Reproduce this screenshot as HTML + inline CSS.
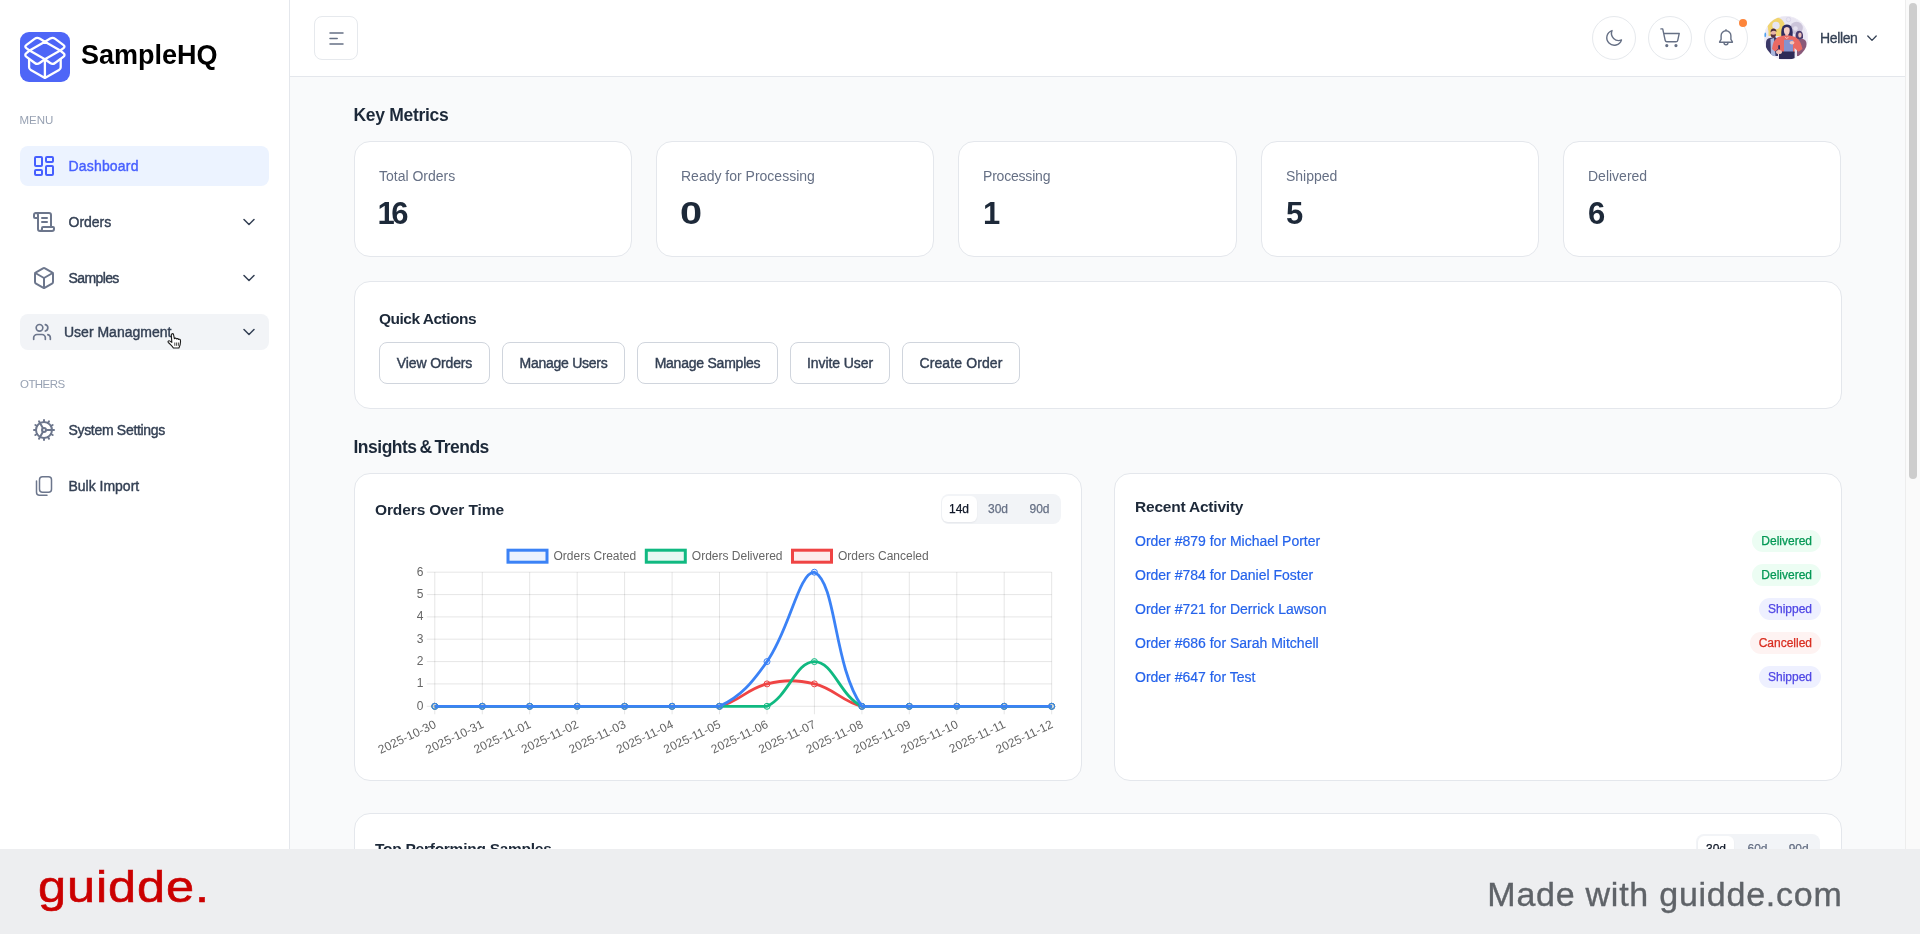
<!DOCTYPE html>
<html lang="en">
<head>
<meta charset="utf-8">
<title>SampleHQ Dashboard</title>
<style>
*{box-sizing:border-box;margin:0;padding:0}
html,body{width:1920px;height:934px;overflow:hidden;background:#f9fafb;font-family:"Liberation Sans",sans-serif;color:#1d2939}
.abs{position:absolute}
#app{position:relative;width:1920px;height:934px;overflow:hidden;background:#f9fafb;will-change:transform}
/* sidebar */
#sidebar{position:absolute;left:0;top:0;width:290px;height:934px;background:#fff;border-right:1px solid #e4e7ec}
.logo{position:absolute;left:20px;top:32px;width:50px;height:50px;border-radius:9px;background:#4e66f7}
.brand{position:absolute;left:81px;top:39px;font-size:27px;font-weight:700;color:#000;line-height:32px;white-space:nowrap}
.sect{position:absolute;left:19.5px;font-size:11.5px;color:#98a2b3;line-height:16px}
.nav{position:absolute;left:20px;width:249px;height:40px;border-radius:8px}
.nav .ic{position:absolute;left:12px;top:8px;width:24px;height:24px}
.nav .tx{position:absolute;left:48px;top:0;line-height:40px;font-size:14px;font-weight:400;color:#344054;white-space:nowrap;-webkit-text-stroke:.4px currentColor}
.nav .chev{position:absolute;left:223px;top:15px;width:12px;height:10px}
.nav.active{background:#ecf3ff}
.nav.active .tx{color:#465fff}
.nav.hover{background:#f2f4f7;height:36px}
/* header */
#header{position:absolute;left:290px;top:0;width:1615px;height:77px;background:#fff;border-bottom:1px solid #e4e7ec}
.hbtn{position:absolute;top:16px;width:44px;height:44px;border:1px solid #e6e9ed;background:#fff}
.circle{border-radius:50%}
/* main */
.h2{position:absolute;left:353.5px;font-size:17.5px;letter-spacing:-.3px;font-weight:700;color:#1d2939;line-height:28px;white-space:nowrap}
.card{position:absolute;background:#fff;border:1px solid #e4e7ec;border-radius:16px}
.metric .lb{position:absolute;left:24px;top:24px;font-size:14px;color:#667085;line-height:20px;white-space:nowrap}
.metric .vl{position:absolute;left:24px;top:54px;font-size:31px;font-weight:700;color:#1d2939;line-height:36px}
.h3{position:absolute;font-size:15.5px;font-weight:700;color:#1d2939;line-height:24px;white-space:nowrap}
.qbtn{position:absolute;top:60px;height:42px;border:1px solid #d0d5dd;border-radius:8px;background:#fff;font-size:14px;color:#344054;line-height:40px;text-align:center;white-space:nowrap;-webkit-text-stroke:.4px currentColor}

.seg{position:absolute;height:30px;border-radius:8px;background:#f2f4f7}
.seg span{position:absolute;top:2px;height:26px;border-radius:6px;font-size:12px;line-height:26px;text-align:center;color:#667085;-webkit-text-stroke:.25px currentColor}
.seg span.on{background:#fff;color:#101828;box-shadow:0 1px 2px rgba(16,24,40,.06)}
.chartsvg{position:absolute;left:-355px;top:-474px;pointer-events:none}
.act{position:absolute;left:20px;top:56px;width:686px;list-style:none}
.act li{position:relative;height:34px}
.act a{position:absolute;left:0;top:0;line-height:22px;font-size:14px;color:#2563eb;white-space:nowrap;-webkit-text-stroke:.2px currentColor}
.bdg{position:absolute;right:0;top:0;height:22px;padding:0 9px;border-radius:11px;font-size:12px;line-height:22px;-webkit-text-stroke:.25px currentColor}
.bdg.ok{background:#ecfdf3;color:#039855}
.bdg.ship{background:#eef0ff;color:#4f46e5}
.bdg.err{background:#fef3f2;color:#d92d20}
.gl{position:absolute;left:38.2px;top:7.5px;font-size:44.5px;line-height:60px;color:#cb0000;letter-spacing:.8px;transform:scaleX(1.135);transform-origin:0 0;-webkit-text-stroke:.6px #cb0000;white-space:nowrap}
.mw{position:absolute;right:77.5px;top:23px;font-size:34px;letter-spacing:.75px;-webkit-text-stroke:.35px #5f6368;line-height:44px;color:#5f6368;white-space:nowrap}
.uname{position:absolute;left:1530px;top:28px;letter-spacing:-.36px;font-size:14px;line-height:20px;color:#344054;-webkit-text-stroke:.3px currentColor}

.nav .ic{color:#6c768c}
.nav.active .ic{color:#465fff}
.dot{position:absolute;left:34px;top:2px;width:8px;height:8px;border-radius:50%;background:#fd853a}
.avatar{position:absolute;left:1474px;top:16px;width:44px;height:44px;border-radius:50%;overflow:hidden;background:#e9e4f3}
/* footer */
#footer{position:absolute;left:0;top:849px;width:1920px;height:85px;background:#edeef0}
#scroll{position:absolute;left:1905px;top:0;width:15px;height:849px;background:#fafafa;border-left:1px solid #ededed}
#thumb{position:absolute;left:3px;top:3px;width:8px;height:476px;border-radius:4px;background:#cdcdcd}
</style>
</head>
<body>
<div id="app">

<!-- MAIN CONTENT -->
<main id="main">
  <h2 class="h2" style="top:101px">Key Metrics</h2>
  <div class="card metric" style="left:354px;top:141px;width:278px;height:116px"><div class="lb">Total Orders</div><div class="vl" style="letter-spacing:-3.4px;left:22.5px">16</div></div>
  <div class="card metric" style="left:656px;top:141px;width:278px;height:116px"><div class="lb">Ready for Processing</div><div class="vl" style="transform:scaleX(1.28);transform-origin:0 0;left:22.5px">0</div></div>
  <div class="card metric" style="left:958px;top:141px;width:279px;height:116px"><div class="lb" style="letter-spacing:-.2px">Processing</div><div class="vl">1</div></div>
  <div class="card metric" style="left:1261px;top:141px;width:278px;height:116px"><div class="lb">Shipped</div><div class="vl">5</div></div>
  <div class="card metric" style="left:1563px;top:141px;width:278px;height:116px"><div class="lb">Delivered</div><div class="vl">6</div></div>

  <div class="card" id="quick" style="left:354px;top:281px;width:1488px;height:128px">
    <h3 class="h3" style="left:24px;top:25px;letter-spacing:-.5px">Quick Actions</h3>
    <div class="qbtn" style="letter-spacing:-0.12px;left:24px;width:111px">View Orders</div>
    <div class="qbtn" style="letter-spacing:-0.27px;left:147px;width:123px">Manage Users</div>
    <div class="qbtn" style="letter-spacing:-0.23px;left:282px;width:141px">Manage Samples</div>
    <div class="qbtn" style="letter-spacing:-0.08px;left:435px;width:100px">Invite User</div>
    <div class="qbtn" style="letter-spacing:0.12px;left:547px;width:118px">Create Order</div>
  </div>

  <h2 class="h2" style="top:433px;letter-spacing:-.5px;word-spacing:-1.5px">Insights &amp; Trends</h2>

  <div class="card" id="chartcard" style="left:354px;top:473px;width:728px;height:308px">
    <h3 class="h3" style="left:20px;top:24px;letter-spacing:-.11px">Orders Over Time</h3>
    <div class="seg" style="left:585.5px;top:20px;width:120.5px">
      <span class="on" style="left:1px;width:35px">14d</span>
      <span style="left:39px;width:37px">30d</span>
      <span style="left:80px;width:38px">90d</span>
    </div>
    <svg class="chartsvg" width="1920" height="934" viewBox="0 0 1920 934" font-family="Liberation Sans, sans-serif">
<path d="M434.8 572.2V714.3M482.3 572.2V714.3M529.7 572.2V714.3M577.2 572.2V714.3M624.6 572.2V714.3M672.1 572.2V714.3M719.5 572.2V714.3M767.0 572.2V714.3M814.4 572.2V714.3M861.9 572.2V714.3M909.3 572.2V714.3M956.8 572.2V714.3M1004.2 572.2V714.3M1051.7 572.2V714.3M426.8 706.3H1051.7M426.8 683.9H1051.7M426.8 661.6H1051.7M426.8 639.2H1051.7M426.8 616.9H1051.7M426.8 594.6H1051.7M426.8 572.2H1051.7" stroke="#000" stroke-opacity=".1" stroke-width="1" fill="none"/>
<g font-size="12" fill="#666" text-anchor="end"><text x="423.5" y="709.8">0</text><text x="423.5" y="687.4">1</text><text x="423.5" y="665.1">2</text><text x="423.5" y="642.8">3</text><text x="423.5" y="620.4">4</text><text x="423.5" y="598.1">5</text><text x="423.5" y="575.7">6</text></g>
<g font-size="12" fill="#666" text-anchor="end" letter-spacing=".12"><text transform="translate(435.3 723.5) rotate(-25.5)" x="0" y="4">2025-10-30</text><text transform="translate(482.8 723.5) rotate(-25.5)" x="0" y="4">2025-10-31</text><text transform="translate(530.2 723.5) rotate(-25.5)" x="0" y="4">2025-11-01</text><text transform="translate(577.7 723.5) rotate(-25.5)" x="0" y="4">2025-11-02</text><text transform="translate(625.1 723.5) rotate(-25.5)" x="0" y="4">2025-11-03</text><text transform="translate(672.6 723.5) rotate(-25.5)" x="0" y="4">2025-11-04</text><text transform="translate(720.0 723.5) rotate(-25.5)" x="0" y="4">2025-11-05</text><text transform="translate(767.5 723.5) rotate(-25.5)" x="0" y="4">2025-11-06</text><text transform="translate(814.9 723.5) rotate(-25.5)" x="0" y="4">2025-11-07</text><text transform="translate(862.4 723.5) rotate(-25.5)" x="0" y="4">2025-11-08</text><text transform="translate(909.8 723.5) rotate(-25.5)" x="0" y="4">2025-11-09</text><text transform="translate(957.3 723.5) rotate(-25.5)" x="0" y="4">2025-11-10</text><text transform="translate(1004.7 723.5) rotate(-25.5)" x="0" y="4">2025-11-11</text><text transform="translate(1052.2 723.5) rotate(-25.5)" x="0" y="4">2025-11-12</text></g>
<path d="M434.8 706.3C453.8 706.3 463.3 706.3 482.3 706.3C501.2 706.3 510.7 706.3 529.7 706.3C548.7 706.3 558.2 706.3 577.2 706.3C596.1 706.3 605.6 706.3 624.6 706.3C643.6 706.3 653.1 706.3 672.1 706.3C691.1 706.3 701.5 706.3 719.5 706.3C739.5 701.6 747.0 688.6 767.0 683.9C785.0 679.7 796.4 679.7 814.4 683.9C834.4 688.6 842.0 701.6 861.9 706.3C879.9 706.3 890.4 706.3 909.3 706.3C928.3 706.3 937.8 706.3 956.8 706.3C975.8 706.3 985.3 706.3 1004.2 706.3C1023.2 706.3 1032.7 706.3 1051.7 706.3" fill="none" stroke="#ef4444" stroke-width="2.8" stroke-linejoin="round"/>
<g fill="#ef4444" fill-opacity=".1" stroke="#ef4444" stroke-width="1"><circle cx="434.8" cy="706.3" r="3"/><circle cx="482.3" cy="706.3" r="3"/><circle cx="529.7" cy="706.3" r="3"/><circle cx="577.2" cy="706.3" r="3"/><circle cx="624.6" cy="706.3" r="3"/><circle cx="672.1" cy="706.3" r="3"/><circle cx="719.5" cy="706.3" r="3"/><circle cx="767.0" cy="683.9" r="3"/><circle cx="814.4" cy="683.9" r="3"/><circle cx="861.9" cy="706.3" r="3"/><circle cx="909.3" cy="706.3" r="3"/><circle cx="956.8" cy="706.3" r="3"/><circle cx="1004.2" cy="706.3" r="3"/><circle cx="1051.7" cy="706.3" r="3"/></g>
<path d="M434.8 706.3C453.8 706.3 463.3 706.3 482.3 706.3C501.2 706.3 510.7 706.3 529.7 706.3C548.7 706.3 558.2 706.3 577.2 706.3C596.1 706.3 605.6 706.3 624.6 706.3C643.6 706.3 653.1 706.3 672.1 706.3C691.1 706.3 700.5 706.3 719.5 706.3C738.5 706.3 751.0 706.3 767.0 706.3C788.9 696.0 795.4 661.6 814.4 661.6C833.4 661.6 839.9 696.0 861.9 706.3C877.9 706.3 890.4 706.3 909.3 706.3C928.3 706.3 937.8 706.3 956.8 706.3C975.8 706.3 985.3 706.3 1004.2 706.3C1023.2 706.3 1032.7 706.3 1051.7 706.3" fill="none" stroke="#10b981" stroke-width="2.8" stroke-linejoin="round"/>
<g fill="#10b981" fill-opacity=".1" stroke="#10b981" stroke-width="1"><circle cx="434.8" cy="706.3" r="3"/><circle cx="482.3" cy="706.3" r="3"/><circle cx="529.7" cy="706.3" r="3"/><circle cx="577.2" cy="706.3" r="3"/><circle cx="624.6" cy="706.3" r="3"/><circle cx="672.1" cy="706.3" r="3"/><circle cx="719.5" cy="706.3" r="3"/><circle cx="767.0" cy="706.3" r="3"/><circle cx="814.4" cy="661.6" r="3"/><circle cx="861.9" cy="706.3" r="3"/><circle cx="909.3" cy="706.3" r="3"/><circle cx="956.8" cy="706.3" r="3"/><circle cx="1004.2" cy="706.3" r="3"/><circle cx="1051.7" cy="706.3" r="3"/></g>
<path d="M434.8 706.3C453.8 706.3 463.3 706.3 482.3 706.3C501.2 706.3 510.7 706.3 529.7 706.3C548.7 706.3 558.2 706.3 577.2 706.3C596.1 706.3 605.6 706.3 624.6 706.3C643.6 706.3 653.1 706.3 672.1 706.3C691.1 706.3 703.5 706.3 719.5 706.3C741.5 696.0 752.1 682.6 767.0 661.6C790.1 629.0 798.6 572.2 814.4 572.2C836.6 582.6 833.4 666.1 861.9 706.3C871.4 706.3 890.4 706.3 909.3 706.3C928.3 706.3 937.8 706.3 956.8 706.3C975.8 706.3 985.3 706.3 1004.2 706.3C1023.2 706.3 1032.7 706.3 1051.7 706.3" fill="none" stroke="#3b82f6" stroke-width="2.8" stroke-linejoin="round"/>
<g fill="#3b82f6" fill-opacity=".1" stroke="#3b82f6" stroke-width="1"><circle cx="434.8" cy="706.3" r="3"/><circle cx="482.3" cy="706.3" r="3"/><circle cx="529.7" cy="706.3" r="3"/><circle cx="577.2" cy="706.3" r="3"/><circle cx="624.6" cy="706.3" r="3"/><circle cx="672.1" cy="706.3" r="3"/><circle cx="719.5" cy="706.3" r="3"/><circle cx="767.0" cy="661.6" r="3"/><circle cx="814.4" cy="572.2" r="3"/><circle cx="861.9" cy="706.3" r="3"/><circle cx="909.3" cy="706.3" r="3"/><circle cx="956.8" cy="706.3" r="3"/><circle cx="1004.2" cy="706.3" r="3"/><circle cx="1051.7" cy="706.3" r="3"/></g>
<rect x="508.0" y="550.2" width="39" height="12" fill="#3b82f6" fill-opacity=".1" stroke="#3b82f6" stroke-width="3"/>
<text x="553.5" y="560.3" font-size="12" fill="#666">Orders Created</text>
<rect x="646.3" y="550.2" width="39" height="12" fill="#10b981" fill-opacity=".1" stroke="#10b981" stroke-width="3"/>
<text x="691.8" y="560.3" font-size="12" fill="#666">Orders Delivered</text>
<rect x="792.5" y="550.2" width="39" height="12" fill="#ef4444" fill-opacity=".1" stroke="#ef4444" stroke-width="3"/>
<text x="838.0" y="560.3" font-size="12" fill="#666">Orders Canceled</text>
</svg>
  </div>

  <div class="card" id="recent" style="left:1114px;top:473px;width:728px;height:308px">
    <h3 class="h3" style="left:20px;top:21px;letter-spacing:-.21px">Recent Activity</h3>
    <ul class="act">
      <li><a>Order #879 for Michael Porter</a><span class="bdg ok">Delivered</span></li>
      <li><a>Order #784 for Daniel Foster</a><span class="bdg ok">Delivered</span></li>
      <li><a>Order #721 for Derrick Lawson</a><span class="bdg ship">Shipped</span></li>
      <li><a>Order #686 for Sarah Mitchell</a><span class="bdg err">Cancelled</span></li>
      <li><a>Order #647 for Test</a><span class="bdg ship">Shipped</span></li>
    </ul>
  </div>

  <div class="card" id="top" style="left:354px;top:813px;width:1488px;height:200px">
    <h3 class="h3" style="left:20px;top:23.300px;letter-spacing:-.26px">Top Performing Samples</h3>
    <div class="seg" style="left:1341px;top:20px;width:123.5px">
      <span class="on" style="left:2px;width:36px">30d</span>
      <span style="left:42.5px;width:38px">60d</span>
      <span style="left:83.700px;width:38px">90d</span>
    </div>
  </div>
</main>

<!-- HEADER -->
<header id="header">
  <div class="hbtn" style="left:24px;border-radius:8px"><svg class="abs" style="left:13px;top:13.5px" width="18" height="14" viewBox="0 0 18 14" fill="none" stroke="#667085" stroke-width="1.5" stroke-linecap="round"><path d="M2 2h13M2 7.5h7.2M2 13h13"/></svg></div>
  <div class="hbtn circle" style="left:1302px"><svg class="abs" style="left:11px;top:11px" width="20" height="20" viewBox="0 0 20 20" fill="none" stroke="#667085" stroke-width="1.4" stroke-linejoin="round"><path d="M17.45 11.95A7.2 7.2 0 0 1 8.05 2.55a7.5 7.5 0 1 0 9.4 9.4Z"/></svg></div>
  <div class="hbtn circle" style="left:1358px"><svg class="abs" style="left:10px;top:10px" width="22" height="22" viewBox="0 0 24 24" fill="none" stroke="#667085" stroke-width="1.5" stroke-linecap="round" stroke-linejoin="round"><circle cx="8.500" cy="20.300" r="1" fill="#667085"/><circle cx="18.500" cy="20.300" r="1" fill="#667085"/><path d="M2.05 2.05h2l2.66 12.42a2 2 0 0 0 2 1.58h9.78a2 2 0 0 0 1.95-1.57l1.65-7.43H5.12"/></svg></div>
  <div class="hbtn circle" style="left:1414px"><svg class="abs" style="left:11px;top:11px" width="20" height="20" viewBox="0 0 20 20" fill="none" stroke="#667085" stroke-width="1.4" stroke-linecap="round" stroke-linejoin="round"><path d="M10 1.700v1.100M10 2.800a4.900 4.900 0 0 0-4.900 4.900v3.700l-1.500 2.400v.5h12.800v-.5l-1.500-2.400V7.700A4.900 4.900 0 0 0 10 2.800Z"/><path d="M8 14.400a2 2.300 0 0 0 4 0"/></svg><span class="dot"></span></div>
  <div class="avatar"><svg width="44" height="44" viewBox="0 0 44 44"><g><rect width="44" height="44" fill="#f1eff7"/><circle cx="22" cy="21" r="20.5" fill="#e9e6f2"/><circle cx="12.2" cy="10.2" r="8.6" fill="#f1d46e"/><rect x="4.5" y="9" width="15.5" height="11" fill="#f1d46e"/><circle cx="12" cy="9.5" r="3.7" fill="#e6e5f3"/><circle cx="32.5" cy="12" r="6.3" fill="#cbc4d9"/><circle cx="31.5" cy="12.5" r="2.3" fill="#e4e0ee"/><circle cx="24.5" cy="3.6" r="2.2" fill="none" stroke="#d8d4e6" stroke-width=".9"/><ellipse cx="1.2" cy="18.8" rx="1" ry="2.4" fill="#4fa3ef"/><path d="M2 40V27q0-4.5 4-5l5-1 3 2v17Z" fill="#3a3766"/><path d="M6.5 23l3.5-1 1.5 18H7Z" fill="#a9b6de"/><ellipse cx="9.3" cy="17.6" rx="2.6" ry="3.4" fill="#e8b3a6"/><path d="M6.5 16.5q0-4 3-4t3 3.6q-1.2-1.300-3-1.300t-3 1.700Z" fill="#4a2c40"/><path d="M6.700 18q2.600 1.600 5.200 0 .200 3.600-2.600 3.700T6.700 18Z" fill="#55303f"/><path d="M33 40V25l2-2.500 4 .5q3.500 1 3.500 5v12Z" fill="#8a5a79"/><path d="M31.600 22.500q-.900-7.800 3.600-7.800t3.800 7.600l-2.500 1h-3Z" fill="#493a6c"/><ellipse cx="35.900" cy="19.100" rx="1.700" ry="2.700" fill="#ecc0b8"/><path d="M17.500 21.500q-1.500-13 5.400-13t5.600 13l-3 1.500h-5Z" fill="#2f2c5f"/><ellipse cx="22.800" cy="14.400" rx="2.900" ry="4.200" fill="#f6cfc6"/><rect x="21.300" y="17.500" width="3" height="4" fill="#f2c5bb"/><path d="M19.800 12.500q.500-3 3-3t3.200 3q-1.500-1.600-3.100-1.600t-3.100 1.600Z" fill="#2f2c5f"/><path d="M8 33q1-9 6-12l5.500-1.500h6.500l5.500 1.500q5 3 7 12l-4 2.800-4-3.800v5H14v-4l-3 2.500Z" fill="#ea6a63"/><path d="M20 23.800h9v12.400h-9Z" fill="#8593cf"/><path d="M15 35.500h15.600v7.500H15Z" fill="#2e2b57"/><ellipse cx="15" cy="36" rx="3" ry="2" fill="#f3c3b8"/><ellipse cx="28" cy="26.800" rx="2.400" ry="1.700" fill="#f3c3b8"/><rect x="14.200" y="29" width="1.800" height="4.500" rx=".9" fill="#2f2c5f"/><path d="M21 20.800l1.800 1.800 1.800-1.800" fill="none" stroke="#f7e3df" stroke-width=".8"/></g></svg></div>
  <div class="uname">Hellen</div>
  <svg class="abs" style="left:1577px;top:35px" width="10" height="7" viewBox="0 0 10 7" fill="none" stroke="#344054" stroke-width="1.3" stroke-linecap="round" stroke-linejoin="round"><path d="M.8 1l4.2 4.4L9.2 1"/></svg>
</header>

<!-- SIDEBAR -->
<aside id="sidebar">
  <div class="logo"><svg class="abs" style="left:0;top:0" width="50" height="50" viewBox="0 0 50 50" fill="none" stroke="#fff" stroke-width="2.3" stroke-linejoin="round" stroke-linecap="round"><path d="M9.60 18.50L6.55 16.34Q4.10 14.60 6.52 12.82L14.58 6.88Q17.00 5.10 19.59 6.61L24.90 9.70ZM40.20 18.50L43.25 16.34Q45.70 14.60 43.28 12.82L35.22 6.88Q32.80 5.10 30.21 6.61L24.90 9.70ZM9.60 18.50L6.42 21.10Q4.10 23.00 6.50 24.80L14.80 31.00Q17.20 32.80 19.63 31.04L24.90 27.20ZM40.20 18.50L43.38 21.10Q45.70 23.00 43.30 24.80L35.00 31.00Q32.60 32.80 30.17 31.04L24.90 27.20Z"/><path d="M9.1 27.2V35.2Q9.1 37 10.8 37.9L24.9 45.9L39 37.9Q40.7 37 40.7 35.2V27.2M24.9 27.2V45.9"/></svg></div>
  <div class="brand">SampleHQ</div>
  <div class="sect" style="top:112px">MENU</div>
  <div class="nav active" style="top:146px"><svg class="ic" viewBox="0 0 24 24" fill="none" stroke="currentColor" stroke-width="2" stroke-linecap="round" stroke-linejoin="round" ><rect width="7" height="9" x="3" y="3" rx="1"/><rect width="7" height="5" x="14" y="3" rx="1"/><rect width="7" height="9" x="14" y="12" rx="1"/><rect width="7" height="5" x="3" y="16" rx="1"/></svg><span class="tx" style="letter-spacing:.18px;left:48.5px">Dashboard</span></div>
  <div class="nav" style="top:202px"><svg class="ic" viewBox="0 0 24 24" fill="none" stroke="currentColor" stroke-width="2" stroke-linecap="round" stroke-linejoin="round" ><path d="M15 12h-5"/><path d="M15 8h-5"/><path d="M19 17V5a2 2 0 0 0-2-2H4"/><path d="M8 21h12a2 2 0 0 0 2-2v-1a1 1 0 0 0-1-1H11a1 1 0 0 0-1 1v1a2 2 0 1 1-4 0V5a2 2 0 1 0-4 0v2a1 1 0 0 0 1 1h3"/></svg><span class="tx" style="left:48.5px">Orders</span><svg class="chev" viewBox="0 0 12 10" fill="none" stroke="#344054" stroke-width="1.5" stroke-linecap="round" stroke-linejoin="round"><path d="M1 2.5l5 5 5-5"/></svg></div>
  <div class="nav" style="top:258px"><svg class="ic" viewBox="0 0 24 24" fill="none" stroke="currentColor" stroke-width="2" stroke-linecap="round" stroke-linejoin="round" ><path d="M21 8a2 2 0 0 0-1-1.73l-7-4a2 2 0 0 0-2 0l-7 4A2 2 0 0 0 3 8v8a2 2 0 0 0 1 1.73l7 4a2 2 0 0 0 2 0l7-4A2 2 0 0 0 21 16Z"/><path d="m3.3 7 8.7 5 8.7-5"/><path d="M12 22V12"/></svg><span class="tx" style="letter-spacing:-.6px;left:48.5px">Samples</span><svg class="chev" viewBox="0 0 12 10" fill="none" stroke="#344054" stroke-width="1.5" stroke-linecap="round" stroke-linejoin="round"><path d="M1 2.5l5 5 5-5"/></svg></div>
  <div class="nav hover" style="top:314px"><svg class="ic" viewBox="0 0 24 24" fill="none" stroke="currentColor" stroke-width="2" stroke-linecap="round" stroke-linejoin="round" style="left:12px;top:8px;width:20px;height:20px"><path d="M16 21v-2a4 4 0 0 0-4-4H6a4 4 0 0 0-4 4v2"/><circle cx="9" cy="7" r="4"/><path d="M22 21v-2a4 4 0 0 0-3-3.87"/><path d="M16 3.13a4 4 0 0 1 0 7.75"/></svg><span class="tx" style="left:44px;line-height:36px">User Managment</span><svg class="chev" style="top:13px" viewBox="0 0 12 10" fill="none" stroke="#344054" stroke-width="1.5" stroke-linecap="round" stroke-linejoin="round"><path d="M1 2.5l5 5 5-5"/></svg></div>
  <div class="sect" style="top:376px;letter-spacing:-.55px;left:20px">OTHERS</div>
  <div class="nav" style="top:410px"><svg class="ic" viewBox="0 0 24 24" fill="none" stroke="currentColor" stroke-width="2" stroke-linecap="round" stroke-linejoin="round" ><path d="M12 20a8 8 0 1 0 0-16 8 8 0 0 0 0 16Z"/><path d="M12 14a2 2 0 1 0 0-4 2 2 0 0 0 0 4Z"/><path d="M12 2v2"/><path d="M12 22v-2"/><path d="m17 20.66-1-1.73"/><path d="M11 10.27 7 3.34"/><path d="m20.66 17-1.73-1"/><path d="m3.34 7 1.73 1"/><path d="M14 12h8"/><path d="M2 12h2"/><path d="m20.66 7-1.73 1"/><path d="m3.34 17 1.73-1"/><path d="m17 3.34-1 1.73"/><path d="m11 13.73-4 6.93"/></svg><span class="tx" style="letter-spacing:-.3px;left:48.4px">System Settings</span></div>
  <div class="nav" style="top:466px"><svg class="ic" viewBox="0 0 24 24" fill="none" stroke="currentColor" stroke-width="1.5" stroke-linecap="round" stroke-linejoin="round"><rect x="7.5" y="2.75" width="12" height="15.5" rx="3"/><path d="M4.5 7v11.25a3 3 0 0 0 3 3H15"/></svg><span class="tx" style="left:48.4px">Bulk Import</span></div>
</aside>

<svg class="abs" style="left:166.500px;top:333px;z-index:5" width="17" height="17" viewBox="0 0 17 17"><path d="M4.300 1.800c-.1-1.300 1.800-1.600 2.200-.3l.9 4.200c.4-.9 1.900-.8 2.100.3.500-.7 1.900-.5 2 .5.600-.6 1.900-.2 1.900.8.500 3-.4 5.400-1.500 7.700H6.400C5.200 12.800 3 11.300 1.300 9.300c-.7-.9.300-2 1.300-1.400l2.200 1.500Z" fill="#fff" stroke="#1a1a1a" stroke-width="1.100" stroke-linejoin="round"/><path d="M7.800 9.500v3.300M9.600 9.500v3.300M11.400 9.500v3.300" stroke="#1a1a1a" stroke-width=".8" fill="none"/></svg>
<div id="scroll"><div id="thumb"></div></div>

<!-- FOOTER -->
<footer id="footer">
  <div class="gl">guidde.</div>
  <div class="mw">Made with guidde.com</div>
</footer>

</div>
</body>
</html>
